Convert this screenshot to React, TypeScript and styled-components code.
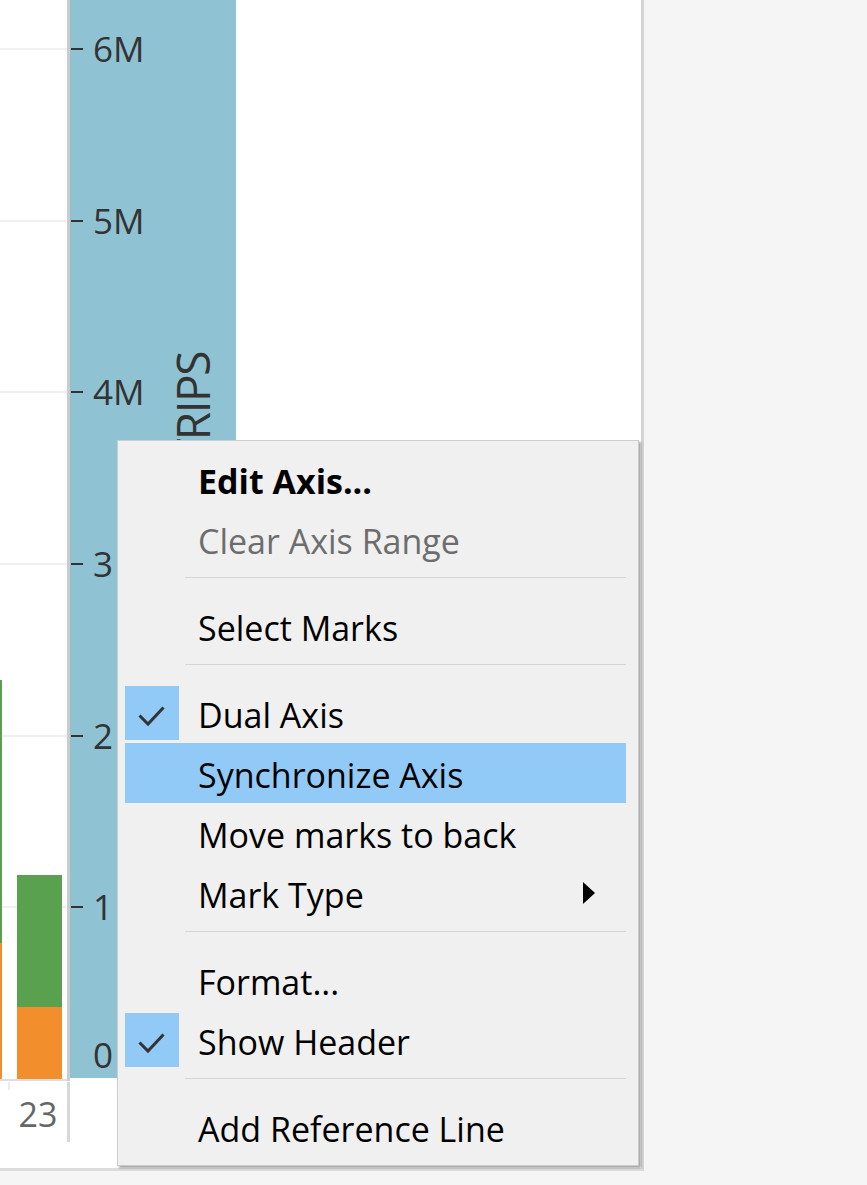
import React from "react";
import styled, { createGlobalStyle } from "styled-components";

const Global = createGlobalStyle`
  html, body { margin: 0; padding: 0; background: #f5f5f5; }
  body { font-family: "Open Sans", "Noto Sans", sans-serif; }
  #root { width: 867px; height: 1185px; }
`;

const Page = styled.div`
  position: relative;
  width: 867px;
  height: 1185px;
  overflow: hidden;
  background: #f5f5f5;
`;

const Sheet = styled.div`
  width: 641px;
  height: 1168px;
  background: #ffffff;
  border-right: 3px solid #d3d3d3;
  border-bottom: 3px solid #dcdcdc;
  display: flex;
  flex-direction: column;
`;

const ChartRow = styled.div`
  display: flex;
  height: 1081px;
  flex: none;
`;

const MarksPane = styled.div`
  position: relative;
  width: 67px;
  height: 1079px;
  border-bottom: 2px solid #dedede;
  overflow: hidden;
`;

const GridLine = styled.div`
  position: absolute;
  left: 0;
  right: 0;
  height: 2px;
  background: #f0f0f0;
`;

const Bar = styled.div`
  position: absolute;
  bottom: 0;
  display: flex;
  flex-direction: column;
`;

const Segment = styled.div<{ $color: string; $h: number }>`
  height: ${(p) => p.$h}px;
  background: ${(p) => p.$color};
`;

const PaneDivider = styled.div<{ $h: number; $color: string }>`
  width: 3px;
  height: ${(p) => p.$h}px;
  background: ${(p) => p.$color};
  flex: none;
`;

const AxisPanel = styled.div`
  position: relative;
  width: 166px;
  height: 1078px;
  background: #8fc3d4;
  flex: none;
  overflow: hidden;
`;

const Tick = styled.div`
  position: absolute;
  left: 1px;
  display: flex;
  align-items: center;
  height: 40px;
  margin-top: -20px;
`;

const TickMark = styled.div`
  width: 12px;
  height: 2px;
  background: #333333;
  margin-right: 10px;
`;

const TickLabel = styled.span<{ $noMark?: boolean }>`
  font-family: "Open Sans", "Noto Sans", sans-serif;
  font-size: 35px;
  line-height: 40px;
  color: #333333;
  margin-left: ${(p) => (p.$noMark ? "22px" : "0")};
`;

const AxisTitle = styled.div`
  position: absolute;
  left: 102px;
  top: 352px;
  writing-mode: vertical-rl;
  transform: rotate(180deg);
  font-family: "Open Sans", "Noto Sans", sans-serif;
  font-size: 46px;
  letter-spacing: -1.5px;
  line-height: 40px;
  color: #333333;
  white-space: nowrap;
`;

const HeaderRow = styled.div`
  display: flex;
  height: 87px;
`;

const HeaderCell = styled.div`
  position: relative;
  width: 67px;
  display: flex;
  justify-content: center;
  padding-top: 12px;
  box-sizing: border-box;
  font-family: "Open Sans", "Noto Sans", sans-serif;
  font-size: 34px;
  line-height: 42px;
  color: #666666;
  padding-left: 9px;
  &::before {
    content: "";
    position: absolute;
    left: 8px;
    top: 1px;
    width: 2px;
    height: 8px;
    background: #ececec;
  }
`;

const HeaderDivider = styled.div`
  width: 3px;
  height: 60px;
  margin-top: 1px;
  background: #d8d8d8;
`;

const Menu = styled.div`
  position: absolute;
  left: 117px;
  top: 440px;
  box-sizing: content-box;
  padding: 8px 12px 8px 7px;
  width: 501px;
  background: #f0f0f0;
  border: 1px solid #cccccc;
  box-shadow: 2px 2px 2px rgba(0, 0, 0, 0.35);
  font-family: "Open Sans", "Noto Sans", sans-serif;
  z-index: 10;
`;

const Item = styled.div<{ $active?: boolean; $disabled?: boolean; $bold?: boolean }>`
  display: flex;
  align-items: center;
  height: 60px;
  background: ${(p) => (p.$active ? "#91c9f7" : "transparent")};
  color: ${(p) => (p.$disabled ? "#6d6d6d" : "#000000")};
  font-size: 34px;
  font-weight: ${(p) => (p.$bold ? 700 : 400)};
  white-space: nowrap;
`;

const CheckCell = styled.div<{ $checked?: boolean }>`
  width: 54px;
  height: 54px;
  flex: none;
  background: ${(p) => (p.$checked ? "#91c9f7" : "transparent")};
  display: flex;
  align-items: center;
  justify-content: center;
`;

const ItemText = styled.span`
  margin-left: 19px;
  padding-top: 4px;
`;

const SubArrow = styled.svg`
  margin-left: auto;
  margin-right: 30px;
  flex: none;
`;

const Separator = styled.div`
  height: 1px;
  margin: 8px 0 18px 60px;
  background: #d5d5d5;
`;

const Check = () => (
  <svg width="54" height="54" viewBox="0 0 54 54">
    <polyline
      points="14.5,29.5 23,38 38.5,21.5"
      fill="none"
      stroke="#333333"
      strokeWidth="3"
    />
  </svg>
);

const TOP = 1079;
const STEP = 171.67;

const ticks = [
  { v: 6, label: "6M" },
  { v: 5, label: "5M" },
  { v: 4, label: "4M" },
  { v: 3, label: "3" },
  { v: 2, label: "2" },
  { v: 1, label: "1" },
];

type MenuEntry =
  | { sep: true }
  | {
      sep?: false;
      text: string;
      bold?: boolean;
      disabled?: boolean;
      checked?: boolean;
      active?: boolean;
      submenu?: boolean;
    };

const entries: MenuEntry[] = [
  { text: "Edit Axis...", bold: true },
  { text: "Clear Axis Range", disabled: true },
  { sep: true },
  { text: "Select Marks" },
  { sep: true },
  { text: "Dual Axis", checked: true },
  { text: "Synchronize Axis", active: true },
  { text: "Move marks to back" },
  { text: "Mark Type", submenu: true },
  { sep: true },
  { text: "Format..." },
  { text: "Show Header", checked: true },
  { sep: true },
  { text: "Add Reference Line" },
];

export default function App() {
  return (
    <Page>
      <Global />
      <Sheet>
        <ChartRow>
          <MarksPane>
            {ticks.map((t) => (
              <GridLine key={t.v} style={{ top: TOP - t.v * STEP - 1 }} />
            ))}
            <Bar style={{ left: -43, width: 45 }}>
              <Segment $color="#59a14f" $h={263} />
              <Segment $color="#f28e2b" $h={136} />
            </Bar>
            <Bar style={{ left: 17, width: 45 }}>
              <Segment $color="#59a14f" $h={132} />
              <Segment $color="#f28e2b" $h={72} />
            </Bar>
          </MarksPane>
          <PaneDivider $h={1081} $color="#cccccc" />
          <AxisPanel>
            {ticks.map((t) => (
              <Tick key={t.v} style={{ top: TOP - t.v * STEP }}>
                <TickMark />
                <TickLabel>{t.label}</TickLabel>
              </Tick>
            ))}
            <Tick style={{ top: 1055 }}>
              <TickLabel $noMark>0</TickLabel>
            </Tick>
            <AxisTitle>TRIPS</AxisTitle>
          </AxisPanel>
        </ChartRow>
        <HeaderRow>
          <HeaderCell>23</HeaderCell>
          <HeaderDivider />
        </HeaderRow>
      </Sheet>

      <Menu>
        {entries.map((e, i) =>
          e.sep ? (
            <Separator key={i} />
          ) : (
            <Item key={i} $active={e.active} $disabled={e.disabled} $bold={e.bold}>
              <CheckCell $checked={e.checked}>{e.checked && <Check />}</CheckCell>
              <ItemText>{e.text}</ItemText>
              {e.submenu && (
                <SubArrow width="13" height="22" viewBox="0 0 13 22">
                  <polygon points="0,0 12,11 0,22" fill="#000000" />
                </SubArrow>
              )}
            </Item>
          )
        )}
      </Menu>
    </Page>
  );
}
